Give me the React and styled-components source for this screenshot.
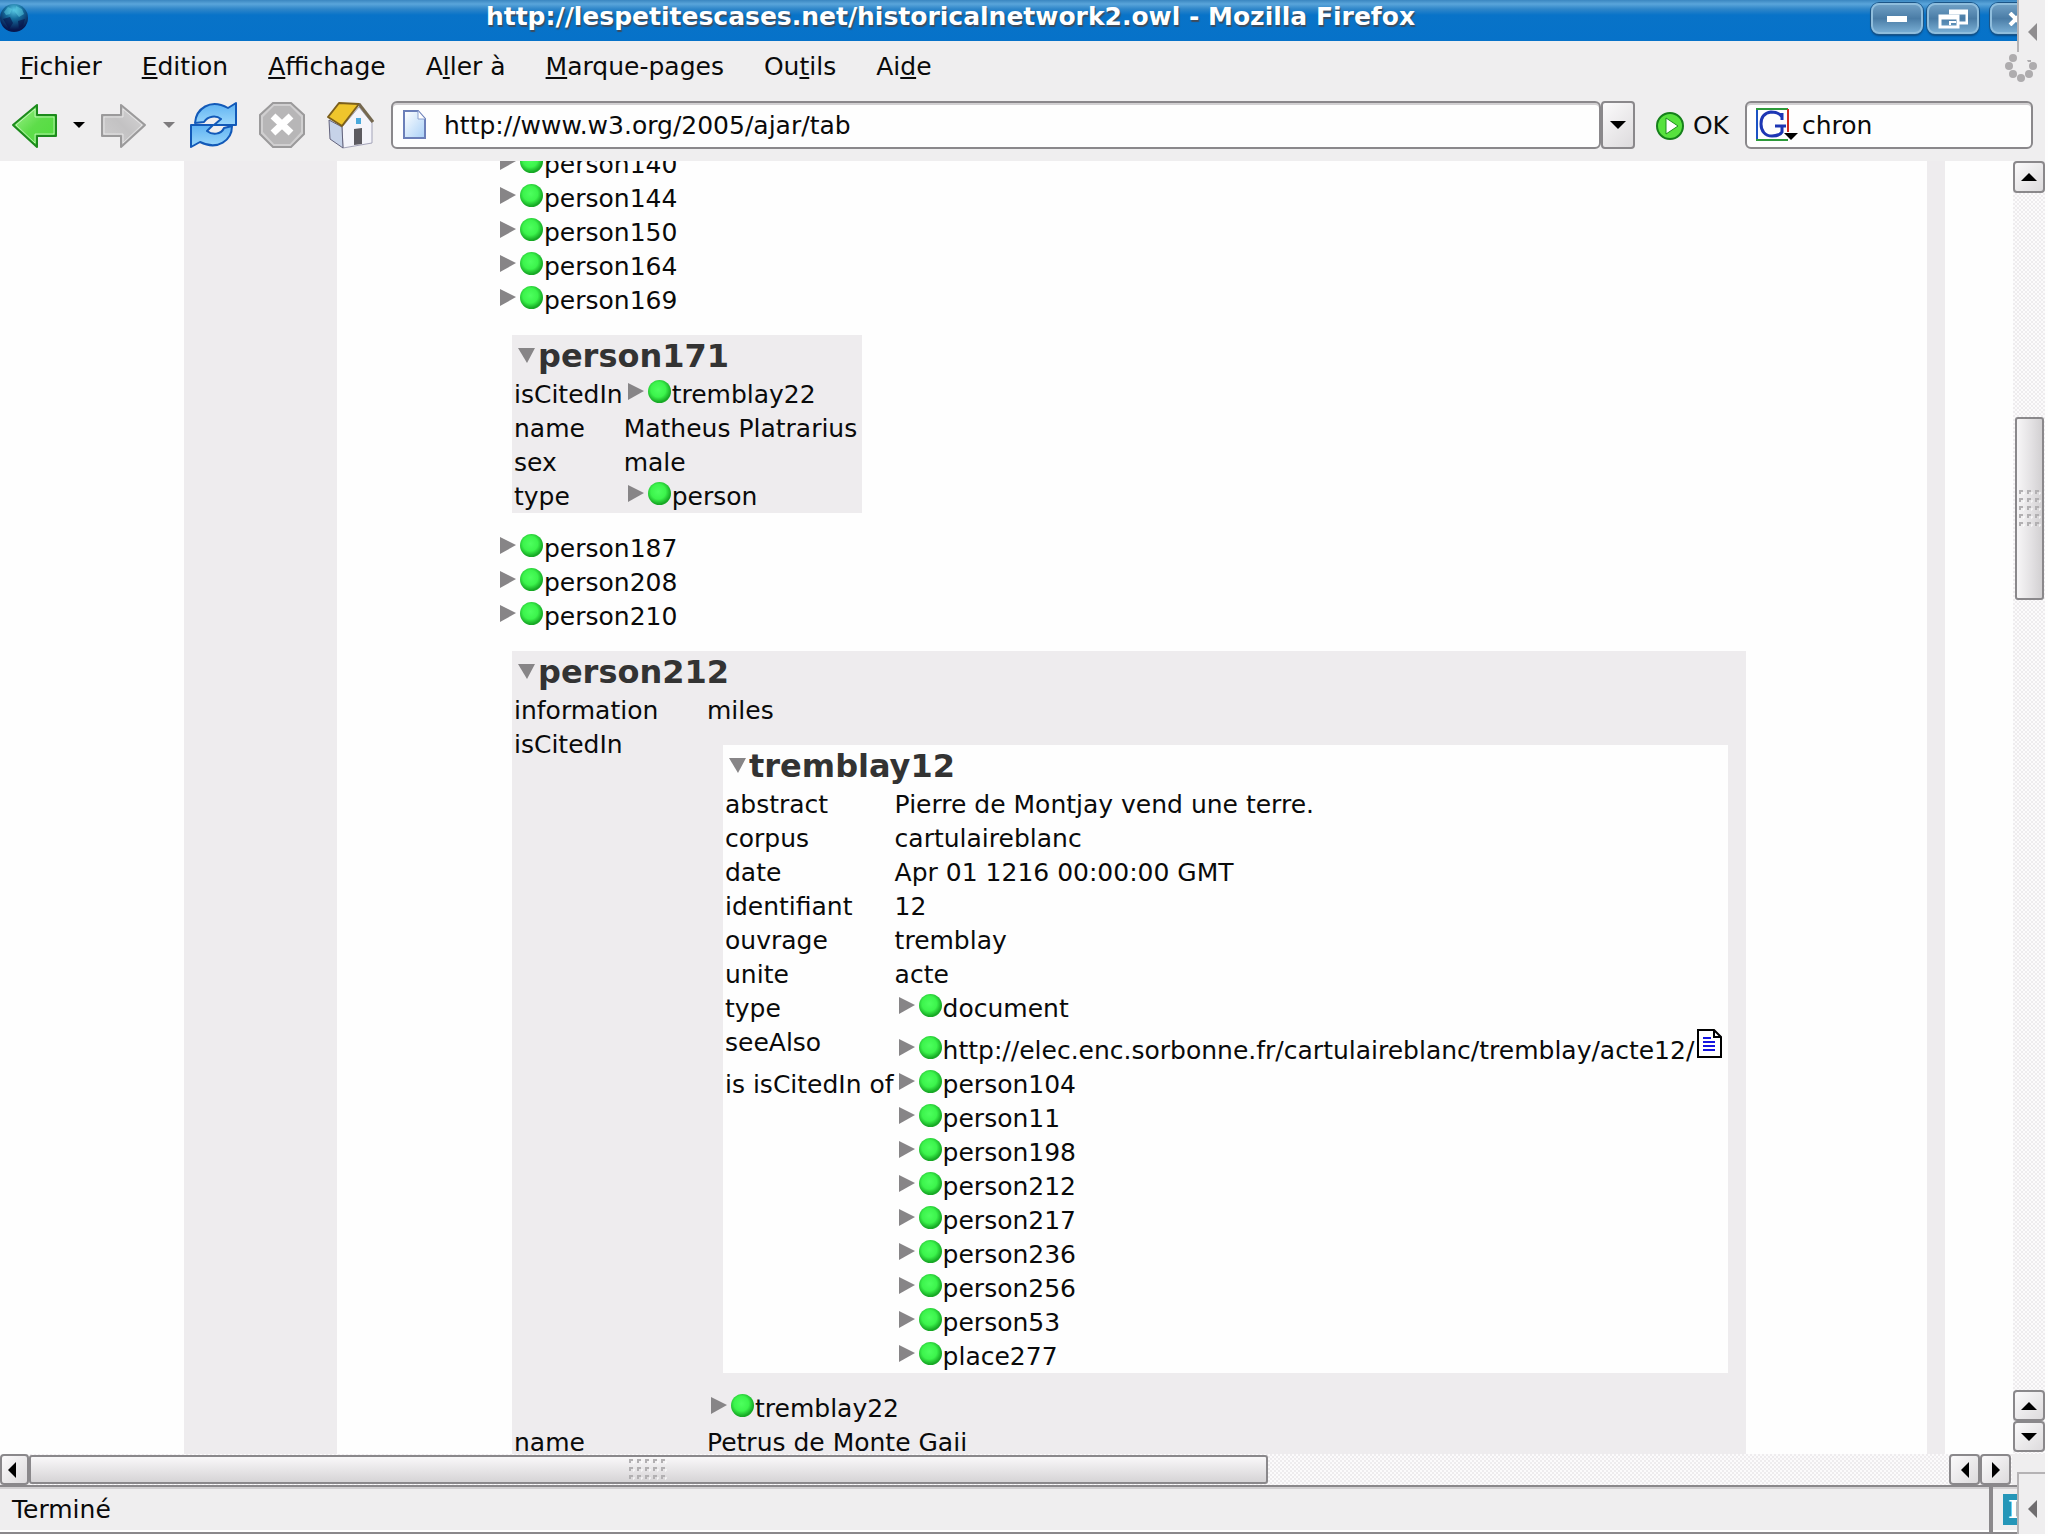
import React from 'react';
import styled, { createGlobalStyle } from 'styled-components';

const COLORS = {
  Chrome: '#efeeef',
  Column: '#eeecee',
  Line: '#8a888b',
  White: '#fefefe',
  Heading: '#333333',
};

const GlobalStyle = createGlobalStyle`
  * {
    box-sizing: border-box;
  }

  body {
    margin: 0;
    background: ${COLORS.White};
    color: #0a0a0a;
    font-family: 'DejaVu Sans', sans-serif;
    font-size: 25px;
  }

  button, input {
    font: inherit;
    color: inherit;
  }
`;

const Window = styled.div`
  position: relative;
  display: flex;
  flex-direction: column;
  height: 100vh;
  padding: 0 3px 2px 0;
  overflow: hidden;
`;

const TitleBar = styled.header`
  display: flex;
  flex: none;
  align-items: flex-start;
  height: 41px;
  padding-top: 3px;
  background: linear-gradient(#3a86c0 0, #5aa5da 4px, #2f86c9 9px, #0873c8 15px, #0672c9 100%);
`;

const Title = styled.h1`
  flex: 1;
  margin: 0;
  color: #ffffff;
  font-size: 25px;
  line-height: 28px;
  text-align: center;
  white-space: nowrap;
  text-shadow: 1px 2px 1px #3f4c5c;
`;

const WindowButtons = styled.div`
  display: flex;
  gap: 4px;
  width: 174px;
`;

const WindowButton = styled.button`
  display: flex;
  align-items: center;
  justify-content: center;
  width: 52px;
  height: 31px;
  margin-left: ${props => props.$apart ? '7px' : '0'};
  padding: 0;
  flex: none;
  border: 2px solid #8fbddc;
  border-radius: 8px;
  background: linear-gradient(#6f9fc4, #4a7ca6 50%, #77acd2);
  box-shadow: 0 0 0 1px #1c5587, 0 2px 2px #0a4a84;
`;

const MenuBar = styled.nav`
  display: flex;
  flex: none;
  align-items: center;
  height: 50px;
  padding: 2px 0 0 20px;
  gap: 40px;
  background: ${COLORS.Chrome};
`;

const MenuItem = styled.button`
  padding: 0;
  border: 0;
  background: none;
  line-height: 34px;
  white-space: nowrap;
`;

const Spinner = styled.span`
  margin-left: auto;
  padding: 8px 7px 0 0;
`;

const Toolbar = styled.div`
  display: flex;
  flex: none;
  align-items: center;
  height: 70px;
  padding: 0 12px 3px 10px;
  background: ${COLORS.Chrome};
`;

const ToolButton = styled.button`
  display: flex;
  align-items: center;
  padding: 0;
  gap: 15px;
  margin-right: ${props => props.$gap || 20}px;
  border: 0;
  background: none;
`;

const Field = styled.div`
  display: flex;
  flex: ${props => props.$width ? 'none' : '1'};
  align-items: center;
  width: ${props => props.$width ? `${props.$width}px` : 'auto'};
  height: 48px;
  padding-left: 9px;
  gap: ${props => props.$gap}px;
  border: 2px solid ${COLORS.Line};
  border-radius: 6px;
  background: ${COLORS.White};
  box-shadow: inset 0 2px 0 #d2d0d2;
`;

const FieldInput = styled.input`
  flex: 1;
  min-width: 0;
  padding: 2px 0 0;
  border: 0;
  outline: 0;
  background: none;
`;

const Bevel = styled.button`
  display: flex;
  flex: none;
  align-items: center;
  justify-content: center;
  width: ${props => props.$width || 31}px;
  height: ${props => props.$height || 31}px;
  padding: ${props => props.$clipped ? '0 6px 0 0' : '0'};
  border: 2px solid ${COLORS.Line};
  border-radius: 4px;
  background: linear-gradient(135deg, #fbfafb, #dddbdd);
`;

const GoButton = styled.button`
  display: flex;
  align-items: center;
  margin: 0 16px 0 20px;
  padding: 2px 0 0;
  gap: 8px;
  border: 0;
  background: none;
`;

const Main = styled.div`
  display: flex;
  flex: 1;
  min-height: 0;
`;

const Viewport = styled.main`
  display: flex;
  flex: 1;
  min-width: 0;
  overflow: hidden;
  padding: 0 68px 0 184px;
`;

const Panel = styled.section`
  flex: 1;
  padding: 0 18px 0 153px;
  background: ${COLORS.Column};
`;

const Page = styled.div`
  height: 100%;
  overflow: hidden;
  padding-left: 159px;
  background: ${COLORS.White};
`;

/* the list is scrolled part of a row past its first visible item */
const Outline = styled.div`
  margin-top: -14px;
`;

const Node = styled.div`
  display: flex;
  align-items: flex-start;
  height: ${props => props.$tall ? '42px' : '34px'};
  padding: ${props => props.$tall ? '10px 6px 0 4px' : '2px 0 0 4px'};
  line-height: 32px;
  white-space: nowrap;
`;

const Arrow = styled.svg`
  flex: none;
  width: 16px;
  height: 17px;
  margin: 4px 4px 0 0;
`;

const Ball = styled.span`
  flex: none;
  width: 23px;
  height: 23px;
  margin: 1px 1px 0 0;
  border-radius: 50%;
  background: radial-gradient(circle at 45% 42%, #4dff5e 0, #3cf44c 40%, #16a824 68%, #2fae3a 100%);
`;

const Source = styled.a`
  flex: none;
  height: 29px;
  margin: -6px 0 0 3px;
  line-height: 0;
`;

const Card = styled.section`
  width: fit-content;
  min-width: ${props => props.$wide ? '1234px' : '0'};
  margin: 18px 17px 18px 16px;
  background: ${props => props.$nested ? COLORS.White : COLORS.Column};
`;

const CardTitle = styled.h2`
  display: flex;
  align-items: flex-start;
  height: 42px;
  margin: 0;
  padding-left: 6px;
  color: ${COLORS.Heading};
  font-size: 32px;
  line-height: 42px;
`;

const OpenArrow = styled.svg`
  flex: none;
  width: 17px;
  height: 17px;
  margin: 12px 3px 0 0;
`;

const Properties = styled.table`
  border-collapse: collapse;
`;

const Label = styled.th`
  width: ${props => props.$wide ? '195px' : 'auto'};
  padding: 2px 1px 0 2px;
  font-weight: normal;
  line-height: 32px;
  text-align: left;
  vertical-align: top;
  white-space: nowrap;
`;

const Value = styled.td`
  padding: 0;
  vertical-align: top;
  white-space: nowrap;
`;

const Literal = styled.div`
  padding: 2px 5px 0 0;
  line-height: 32px;
`;

const dots = 'repeating-conic-gradient(#eeecee 0 25%, #fcfbfc 0 50%) 0 0 / 4px 4px';

const VerticalBar = styled.div`
  display: flex;
  flex: none;
  flex-direction: column;
  width: 32px;
  padding-bottom: 2px;
  background: ${dots};
`;

const VerticalThumb = styled.div`
  display: flex;
  align-items: center;
  justify-content: center;
  height: 183px;
  margin: 224px 1px auto 2px;
  border: 2px solid ${COLORS.Line};
  border-radius: 3px;
  background: linear-gradient(90deg, #f7f6f7, #e2e0e2 60%, #d2d0d2);
`;

const HorizontalBar = styled.div`
  display: flex;
  flex: none;
  height: 31px;
  padding-right: 34px;
  background: linear-gradient(${COLORS.Chrome}, ${COLORS.Chrome}) right / 33px 100% no-repeat, ${dots};
`;

const HorizontalThumb = styled.div`
  display: flex;
  align-items: center;
  justify-content: center;
  width: calc(62% - 8px);
  margin: 1px auto 1px 0;
  border: 2px solid ${COLORS.Line};
  border-radius: 3px;
  background: linear-gradient(#f9f8f9, #e4e2e4 60%, #d6d4d6);
`;

const StatusBar = styled.footer`
  display: flex;
  flex: none;
  height: 49px;
  gap: 4px;
  background: ${COLORS.Line};
`;

const StatusCell = styled.div`
  display: flex;
  flex: ${props => props.$last ? 'none' : '1'};
  align-items: center;
  width: ${props => props.$last ? '52px' : 'auto'};
  margin: 2px 0;
  padding: ${props => props.$last ? '0 10px 1px' : '0 12px 1px'};
  border-top: 2px solid #d2d0d2;
  border-bottom: 2px solid ${COLORS.White};
  background: ${COLORS.Chrome};
`;

const Badge = styled.span`
  width: 32px;
  height: 31px;
  padding-left: 5px;
  overflow: hidden;
  background: #2596b8;
  color: #ffffff;
  font-family: 'DejaVu Serif', serif;
  font-weight: bold;
  line-height: 31px;
`;

/* handles of the hidden desktop panel, drawn over the window's right corners */
const PanelHandle = styled.button`
  position: absolute;
  right: 3px;
  ${props => props.$bottom ? 'bottom: 2px; height: 62px;' : 'top: 0; height: 52px;'}
  display: flex;
  align-items: center;
  justify-content: center;
  width: 28px;
  padding: ${props => props.$bottom ? '10px 0 0' : '12px 0 0'};
  border: solid #b5b3b5;
  border-width: ${props => props.$bottom ? '2px 0 0 2px' : '0 0 0 2px'};
  background: ${COLORS.Chrome};
`;

const MENU = [
  ['', 'F', 'ichier'],
  ['', 'E', 'dition'],
  ['', 'A', 'ffichage'],
  ['A', 'l', 'ler à'],
  ['', 'M', 'arque-pages'],
  ['Ou', 't', 'ils'],
  ['Ai', 'd', 'e'],
];

const CITED = [
  'person104', 'person11', 'person198', 'person212', 'person217',
  'person236', 'person256', 'person53', 'place277',
];

const TRIANGLES = {
  down: '0,0 14,0 7,7',
  up: '0,7 14,7 7,0',
  left: '7,0 7,14 0,7',
  right: '0,0 0,14 7,7',
};

const Triangle = ({ to = 'down', size = 16, color = '#000000' }) => {
  const upright = to === 'up' || to === 'down';
  return (
    <svg
      width={upright ? size : size / 2}
      height={upright ? size / 2 : size}
      viewBox={upright ? '0 0 14 7' : '0 0 7 14'}
      aria-hidden="true"
    >
      <polygon points={TRIANGLES[to]} fill={color} />
    </svg>
  );
};

const Grip = ({ columns, rows }) => {
  const marks = [];
  for (let x = 0; x < columns; ++x) {
    for (let y = 0; y < rows; ++y) {
      marks.push(
        <g key={`${x}-${y}`} transform={`translate(${x * 8} ${y * 8})`}>
          <path d="M1 4V1H4" fill="none" stroke="#b2b0b2" strokeWidth="2" />
          <path d="M4 4H5V2" fill="none" stroke="#ffffff" strokeWidth="1" />
        </g>
      );
    }
  }
  return <svg width={columns * 8 - 2} height={rows * 8 - 2} aria-hidden="true">{marks}</svg>;
};

const Globe = () => (
  <svg width="30" height="30" viewBox="0 0 30 30" aria-hidden="true">
    <defs>
      <radialGradient id="globe" cx="50%" cy="22%" r="70%">
        <stop offset="0" stopColor="#58c8e4" />
        <stop offset="0.45" stopColor="#156c9c" />
        <stop offset="1" stopColor="#07174e" />
      </radialGradient>
    </defs>
    <circle cx="14" cy="15" r="14" fill="url(#globe)" />
    <path d="M4 9L8 4L12 6L10 11L6 12ZM16 3L22 6L24 11L19 14L15 9Z" fill="#5fd0e4" opacity="0.5" />
    <path d="M3 16L10 14L13 20L9 26ZM18 18L25 16L23 23L19 25Z" fill="#06134a" opacity="0.6" />
  </svg>
);

const HistoryArrow = ({ forward }) => (
  <svg width="48" height="48" viewBox="0 0 48 48" aria-hidden="true">
    <defs>
      <linearGradient id={forward ? 'next' : 'back'} x1="0" y1="0" x2="1" y2="1">
        <stop offset="0" stopColor={forward ? '#d9d8d9' : '#a6f394'} />
        <stop offset="0.5" stopColor={forward ? '#c3c2c3' : '#5edd4a'} />
        <stop offset="1" stopColor={forward ? '#cfcecf' : '#4fdc3c'} />
      </linearGradient>
    </defs>
    <g transform={forward ? 'translate(48 0) scale(-1 1)' : undefined}>
      <path
        d="M3 24L27 4V14H46V35H27V46Z"
        fill={`url(#${forward ? 'next' : 'back'})`}
        stroke={forward ? '#9b9a9b' : '#1c8a1c'}
        strokeWidth="2"
        strokeLinejoin="round"
      />
      <path d="M6 24L25 8V16H44V33H25V42Z" fill="none" stroke="#ffffff" strokeWidth="1" opacity="0.5" />
    </g>
  </svg>
);

const ReloadIcon = () => (
  <svg width="48" height="48" viewBox="0 0 48 48" aria-hidden="true">
    <defs>
      <linearGradient id="reload" x1="0" y1="0" x2="0" y2="1">
        <stop offset="0" stopColor="#5fb2f2" />
        <stop offset="1" stopColor="#9cd8fb" />
      </linearGradient>
    </defs>
    <g fill="url(#reload)" stroke="#1259b8" strokeWidth="2" strokeLinejoin="round">
      <path d="M5 22C6 8 20 -3 38 7L46 2V24H24L31 18C26 14 18 15 14 21Z" />
      <path d="M42 25C42 39 28 50 10 41L1 46V24H23L17 30C22 34 31 34 34 27Z" />
    </g>
  </svg>
);

const StopIcon = () => (
  <svg width="48" height="48" viewBox="0 0 48 48" aria-hidden="true">
    <path d="M15 2H33L46 14V33L33 46H15L2 33V14Z" fill="#d0cfd0" stroke="#9b9a9b" strokeWidth="2" />
    <path d="M16 5H32L43 16V31L32 43H16L5 31V16Z" fill="#b7b6b7" />
    <path d="M15 15L33 32M33 15L15 32" stroke="#ffffff" strokeWidth="7" />
  </svg>
);

const HomeIcon = () => (
  <svg width="48" height="48" viewBox="0 0 48 48" aria-hidden="true">
    <path d="M33 6L46 22V42L17 47L16 26Z" fill="#f4f4fa" stroke="#a3a3b8" />
    <path d="M3 19L16 26L17 47L4 38Z" fill="#c6d2e8" stroke="#62627c" />
    <path d="M28 28L36 27V43L28 44Z" fill="#5c5a60" />
    <path d="M30 17H35V23H30Z" fill="#49a9dc" />
    <path d="M13 2L33 3L16 25L2 16Z" fill="#efc52c" stroke="#7c5f1c" strokeWidth="2" strokeLinejoin="round" />
    <path d="M33 3L47 21" stroke="#75684f" strokeWidth="3" />
  </svg>
);

const PageIcon = () => (
  <svg width="26" height="30" viewBox="0 0 26 30" aria-hidden="true">
    <defs>
      <linearGradient id="sheet" x1="0" y1="0" x2="1" y2="1">
        <stop offset="0" stopColor="#ffffff" />
        <stop offset="1" stopColor="#a9d0f7" />
      </linearGradient>
    </defs>
    <path d="M2 1H16L23 9V28H2Z" fill="url(#sheet)" stroke="#6b7fb9" strokeWidth="2" />
    <path d="M16 1V9H23" fill="#ffffff" stroke="#8aa0d0" />
  </svg>
);

const GoIcon = () => (
  <svg width="30" height="30" viewBox="0 0 30 30" aria-hidden="true">
    <circle cx="15" cy="15" r="13" fill="#57e23e" stroke="#15801a" strokeWidth="2" />
    <path d="M11 7L23 15L11 23Z" fill="#ffffff" stroke="#1c8f1c" />
  </svg>
);

const SearchEngineIcon = () => (
  <svg width="42" height="33" viewBox="0 0 42 33" aria-hidden="true">
    <path d="M1 1V32" stroke="#1b52c4" strokeWidth="2" />
    <path d="M0 1H32M0 32H32" stroke="#2c9a3a" strokeWidth="2" />
    <path d="M32 1V24" stroke="#cf2a20" strokeWidth="2" />
    <path d="M26 12V5M26 9C23 4 18 4 15 4C8 5 5 10 5 16C5 23 9 28 16 28C21 28 25 26 26 24V18M19 18H30" fill="none" stroke="#1d36b4" strokeWidth="3" />
    <path d="M28 25H42L35 32Z" fill="#000000" />
  </svg>
);

const SourceIcon = () => (
  <svg width="25" height="29" viewBox="0 0 25 29" aria-hidden="true">
    <path d="M1 1H17L24 8V28H1Z" fill="#ffffff" stroke="#000000" strokeWidth="2" />
    <path d="M17 1V8H24" fill="none" stroke="#000000" strokeWidth="2" />
    <path d="M6 9H14M6 13H18M6 17H18M6 21H18" stroke="#1414e0" strokeWidth="2" />
  </svg>
);

const ThrobberIcon = () => (
  <svg width="33" height="30" viewBox="0 0 33 30" aria-hidden="true">
    <g fill="#aeacae">
      <circle cx="8" cy="5" r="4" />
      <circle cx="4" cy="13" r="4" />
      <circle cx="8" cy="21" r="4" />
      <circle cx="16" cy="25" r="4" />
      <circle cx="24" cy="21" r="4" />
      <circle cx="28" cy="13" r="4" />
      <path d="M22 7H26V9H23Z" />
    </g>
  </svg>
);

const Resource = ({ name, source }) => (
  <Node $tall={Boolean(source)}>
    <Arrow viewBox="0 0 16 17" aria-hidden="true">
      <polygon points="0,0 16,8 0,17" fill="#878587" />
    </Arrow>
    <Ball />
    {name}
    {source && <Source href={source} aria-label="View source"><SourceIcon /></Source>}
  </Node>
);

const Row = ({ label, wide, children }) => (
  <tr>
    <Label scope="row" $wide={wide}>{label}</Label>
    <Value>
      {typeof children === 'string' ? <Literal>{children}</Literal> : children}
    </Value>
  </tr>
);

const ResourceCard = ({ name, nested, wide, children }) => (
  <Card $nested={nested} $wide={wide}>
    <CardTitle>
      <OpenArrow viewBox="0 0 17 17" aria-hidden="true">
        <polygon points="0,1 17,1 9,16" fill="#878587" />
      </OpenArrow>
      {name}
    </CardTitle>
    <Properties>
      <tbody>{children}</tbody>
    </Properties>
  </Card>
);

const App = () => (
  <Window>
    <GlobalStyle />
    <TitleBar>
      <Globe />
      <Title>http://lespetitescases.net/historicalnetwork2.owl - Mozilla Firefox</Title>
      <WindowButtons>
        <WindowButton aria-label="Minimize">
          <svg width="20" height="6"><rect width="20" height="6" fill="#ffffff" /></svg>
        </WindowButton>
        <WindowButton aria-label="Restore">
          <svg width="30" height="20" viewBox="0 0 30 20">
            <path d="M11 2H29V14H21M11 4H29" fill="none" stroke="#ffffff" strokeWidth="3" />
            <path d="M2 7H20V18H2ZM2 9H20" fill="none" stroke="#ffffff" strokeWidth="3" />
            <path d="M12 16V13H18" fill="none" stroke="#ffffff" strokeWidth="2" />
          </svg>
        </WindowButton>
        <WindowButton aria-label="Close" $apart>
          <svg width="16" height="14" viewBox="0 0 16 14">
            <path d="M2 1L14 13M14 1L2 13" stroke="#ffffff" strokeWidth="4" />
          </svg>
        </WindowButton>
      </WindowButtons>
    </TitleBar>

    <MenuBar>
      {MENU.map(([before, key, after]) => (
        <MenuItem key={before + key + after}>{before}<u>{key}</u>{after}</MenuItem>
      ))}
      <Spinner><ThrobberIcon /></Spinner>
    </MenuBar>

    <Toolbar>
      <ToolButton $gap={15} aria-label="Back">
        <HistoryArrow />
        <Triangle size={12} />
      </ToolButton>
      <ToolButton $gap={15} aria-label="Forward">
        <HistoryArrow forward />
        <Triangle size={12} color="#7d7b7d" />
      </ToolButton>
      <ToolButton aria-label="Reload"><ReloadIcon /></ToolButton>
      <ToolButton aria-label="Stop"><StopIcon /></ToolButton>
      <ToolButton $gap={17} aria-label="Home"><HomeIcon /></ToolButton>
      <Field $gap={16}>
        <PageIcon />
        <FieldInput aria-label="Address" defaultValue="http://www.w3.org/2005/ajar/tab" />
      </Field>
      <Bevel $width={34} $height={48} aria-label="Address history"><Triangle /></Bevel>
      <GoButton><GoIcon />OK</GoButton>
      <Field $width={288} $gap={4}>
        <SearchEngineIcon />
        <FieldInput aria-label="Search" defaultValue="chron" />
      </Field>
    </Toolbar>

    <Main>
      <Viewport>
        <Panel>
          <Page>
            <Outline>
              <Resource name="person140" />
              <Resource name="person144" />
              <Resource name="person150" />
              <Resource name="person164" />
              <Resource name="person169" />
              <ResourceCard name="person171">
                <Row label="isCitedIn"><Resource name="tremblay22" /></Row>
                <Row label="name">Matheus Platrarius</Row>
                <Row label="sex">male</Row>
                <Row label="type"><Resource name="person" /></Row>
              </ResourceCard>
              <Resource name="person187" />
              <Resource name="person208" />
              <Resource name="person210" />
              <ResourceCard name="person212" wide>
                <Row label="information" wide>miles</Row>
                <Row label="isCitedIn" wide>
                  <ResourceCard name="tremblay12" nested>
                    <Row label="abstract">Pierre de Montjay vend une terre.</Row>
                    <Row label="corpus">cartulaireblanc</Row>
                    <Row label="date">Apr 01 1216 00:00:00 GMT</Row>
                    <Row label="identifiant">12</Row>
                    <Row label="ouvrage">tremblay</Row>
                    <Row label="unite">acte</Row>
                    <Row label="type"><Resource name="document" /></Row>
                    <Row label="seeAlso">
                      <Resource
                        name="http://elec.enc.sorbonne.fr/cartulaireblanc/tremblay/acte12/"
                        source="#acte12"
                      />
                    </Row>
                    <Row label="is isCitedIn of">
                      {CITED.map(name => <Resource key={name} name={name} />)}
                    </Row>
                  </ResourceCard>
                  <Resource name="tremblay22" />
                </Row>
                <Row label="name" wide>Petrus de Monte Gaii</Row>
              </ResourceCard>
            </Outline>
          </Page>
        </Panel>
      </Viewport>
      <VerticalBar>
        <Bevel $width={32} $height={32} aria-label="Scroll up"><Triangle to="up" /></Bevel>
        <VerticalThumb><Grip columns={3} rows={5} /></VerticalThumb>
        <Bevel $width={32} aria-label="Page up"><Triangle to="up" /></Bevel>
        <Bevel $width={32} aria-label="Scroll down"><Triangle /></Bevel>
      </VerticalBar>
    </Main>

    <HorizontalBar>
      <Bevel $width={29} $clipped aria-label="Scroll left"><Triangle to="left" /></Bevel>
      <HorizontalThumb><Grip columns={5} rows={3} /></HorizontalThumb>
      <Bevel aria-label="Page left"><Triangle to="left" /></Bevel>
      <Bevel aria-label="Scroll right"><Triangle to="right" /></Bevel>
    </HorizontalBar>

    <StatusBar>
      <StatusCell>Terminé</StatusCell>
      <StatusCell $last><Badge>I</Badge></StatusCell>
    </StatusBar>

    <PanelHandle aria-label="Show panel">
      <Triangle to="left" size={18} color="#8f8d8f" />
    </PanelHandle>
    <PanelHandle $bottom aria-label="Hide panel">
      <Triangle to="left" size={18} color="#6f6d6f" />
    </PanelHandle>
  </Window>
);

export default App;
